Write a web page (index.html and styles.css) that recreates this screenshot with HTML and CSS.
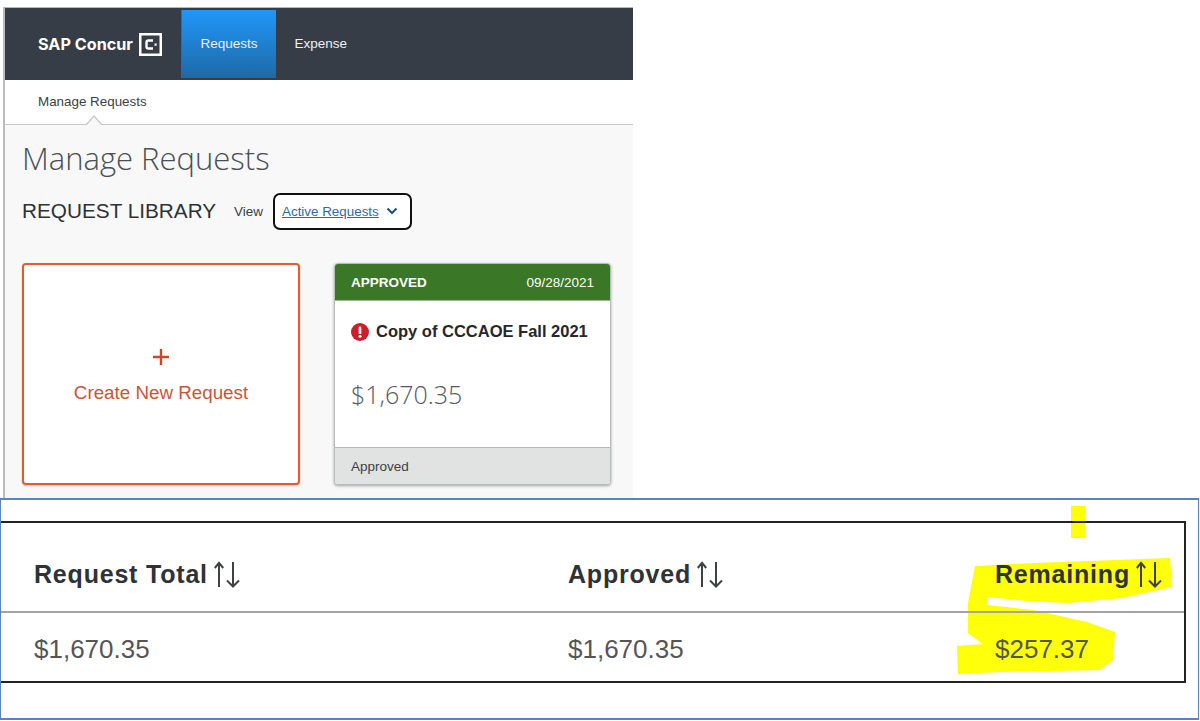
FILE: index.html
```html
<!DOCTYPE html>
<html lang="en">
<head>
<meta charset="utf-8">
<title>SAP Concur Manage Requests</title>
<link rel="stylesheet" href="styles.css">
</head>
<body>
<svg class="defs" width="0" height="0" aria-hidden="true">
  <symbol id="sort-arrows" viewBox="0 0 27 27">
    <path d="M5 26V2M.8 7 5 1.800 9.200 7M19 1v24M13 19.500l6 6 6-6" fill="none" stroke="#3f4245" stroke-width="2"/>
  </symbol>
</svg>
<section class="app">
  <header class="nav">
    <div class="brand">
      <span class="brand-name">SAP Concur</span>
      <svg class="brand-mark" width="23" height="23" viewBox="0 0 23 23" aria-hidden="true">
        <rect x="1.250" y="1.250" width="20.500" height="20.500" fill="none" stroke="#fff" stroke-width="2.500"/>
        <path d="M14 7.500H9.500a2 2 0 0 0-2 2v4a2 2 0 0 0 2 2H14" fill="none" stroke="#fff" stroke-width="2.400"/>
        <rect x="15.500" y="10.500" width="2.200" height="2.200" fill="#fff"/>
      </svg>
    </div>
    <a class="tab tab-active">Requests</a>
    <a class="tab">Expense</a>
  </header>
  <nav class="subnav"><span>Manage Requests</span><i class="caret"></i></nav>
  <main class="content">
    <h1 class="title">Manage Requests</h1>
    <div class="library">
      <h2 class="library-title">REQUEST LIBRARY</h2>
      <span class="view-label">View</span>
      <div class="view-select">
        <a class="view-link">Active Requests</a>
        <svg width="12" height="8" viewBox="0 0 12 8" aria-hidden="true"><path d="M1.500 1.500 6 6l4.500-4.500" fill="none" stroke="#1f4e79" stroke-width="2"/></svg>
      </div>
    </div>
    <div class="cards">
      <div class="create">
        <svg width="16" height="16" viewBox="0 0 16 16" aria-hidden="true"><path d="M8 0v16M0 8h16" stroke="#c8482c" stroke-width="2.400"/></svg>
        <span>Create New Request</span>
      </div>
      <article class="card">
        <div class="card-head"><strong>APPROVED</strong><span>09/28/2021</span></div>
        <div class="card-body">
          <div class="card-name">
            <svg width="18" height="18" viewBox="0 0 18 18" aria-hidden="true"><circle cx="9" cy="9" r="9" fill="#c9202c"/><rect x="7.700" y="3.500" width="2.600" height="7.500" rx="1" fill="#fff"/><circle cx="9" cy="13.300" r="1.500" fill="#fff"/></svg>
            <span>Copy of CCCAOE Fall 2021</span>
          </div>
          <div class="card-amount">$1,670.35</div>
        </div>
        <div class="card-foot">Approved</div>
      </article>
    </div>
  </main>
</section>
<section class="panel">
  <svg class="highlight" width="1200" height="223" viewBox="0 498 1200 223" aria-hidden="true">
    <path fill="#ffff0a" d="M1071 506h14l1 32h-15zM975 566l60-3 135-5 2 29-50 11-55 5-40-2-39-4-1 8 46 5 54 12 28 10-2 28-13 10-100 2-42 2-1-28 26-2-15-11v-30z"/>
  </svg>
  <div class="table">
    <div class="row row-head">
      <div class="cell cell-a">Request Total <svg class="sort" width="27" height="27"><use href="#sort-arrows"/></svg></div>
      <div class="cell cell-b">Approved <svg class="sort" width="27" height="27"><use href="#sort-arrows"/></svg></div>
      <div class="cell cell-c">Remaining <svg class="sort" width="27" height="27"><use href="#sort-arrows"/></svg></div>
    </div>
    <div class="row row-data">
      <div class="cell cell-a">$1,670.35</div>
      <div class="cell cell-b">$1,670.35</div>
      <div class="cell cell-c">$257.37</div>
    </div>
  </div>
</section>
</body>
</html>
```

FILE: styles.css
```css
* { box-sizing: border-box; }
html, body { margin: 0; padding: 0; }
body {
  width: 1200px;
  height: 721px;
  overflow: hidden;
  background: #fff;
  font-family: "Liberation Sans", Arial, sans-serif;
  padding-top: 7px;
}
.defs { display: block; height: 0; }
.app {
  width: 630px;
  height: 491px;
  margin-left: 3px;
  border-left: 2px solid #b9bbbd;
  border-top: 1px solid #b4b6b8;
  background: #f8f8f8;
}
.nav {
  height: 72px;
  display: flex;
  align-items: center;
  background: #373d46;
  color: #fff;
}
.brand {
  display: flex;
  align-items: center;
  gap: 6px;
  width: 177px;
  padding-left: 33px;
}
.brand-name {
  font-family: Inter, "Liberation Sans", sans-serif;
  font-size: 16.200px;
  font-weight: 700;
  white-space: nowrap;
}
.brand-mark { flex: none; }
.tab {
  font-size: 13.500px;
  line-height: 68px;
  padding: 0 18.500px;
  color: #eef0f2;
}
.tab-active {
  width: 94px;
  height: 68px;
  background: linear-gradient(#2197f8, #1e69a7);
  box-shadow: -1px 0 0 #54606c;
}
.subnav {
  position: relative;
  height: 45px;
  padding: 14px 0 0 33px;
  background: #fff;
  border-bottom: 1px solid #c9c9c9;
  font-size: 13.400px;
  color: #3b3f44;
}
.caret {
  position: absolute;
  left: 80px;
  bottom: -1px;
  width: 0;
  height: 0;
  border-left: 9px solid transparent;
  border-right: 9px solid transparent;
  border-bottom: 10px solid #c9c9c9;
}
.caret::after {
  content: "";
  position: absolute;
  left: -8px;
  top: 1.500px;
  border-left: 8px solid transparent;
  border-right: 8px solid transparent;
  border-bottom: 9px solid #f8f8f8;
}
.content { padding: 0 0 0 17px; }
.title {
  margin: 13px 0 0;
  font-family: "Open Sans", sans-serif;
  font-size: 31px;
  line-height: 40px;
  font-weight: 300;
  color: #4a4f55;
}
.library {
  display: flex;
  align-items: center;
  margin-top: 15px;
  height: 36px;
}
.library-title {
  margin: 0;
  width: 212px;
  font-size: 20.750px;
  font-weight: 400;
  color: #2e3236;
  white-space: nowrap;
}
.view-label {
  width: 39px;
  font-size: 13.500px;
  color: #3b3f44;
}
.view-select {
  display: flex;
  align-items: center;
  gap: 7px;
  width: 139px;
  height: 37px;
  padding-left: 7px;
  border: 2px solid #111;
  border-radius: 7px;
  background: #fff;
}
.view-link {
  font-size: 13.400px;
  color: #2f6aa3;
  text-decoration: underline;
  white-space: nowrap;
}
.cards {
  display: flex;
  gap: 34px;
  margin-top: 34px;
}
.create {
  width: 278px;
  height: 222px;
  display: flex;
  flex-direction: column;
  align-items: center;
  padding-top: 84px;
  gap: 17px;
  background: #fff;
  border: 2px solid #e9592f;
  border-radius: 4px;
  box-shadow: 0 1px 2px rgba(0, 0, 0, .2);
  color: #c8553b;
  font-size: 18.800px;
}
.card {
  width: 277px;
  height: 222px;
  display: flex;
  flex-direction: column;
  background: #fff;
  border: 1px solid #b9bcbc;
  border-radius: 4px;
  box-shadow: 0 1px 3px rgba(0, 0, 0, .35);
  overflow: hidden;
}
.card-head {
  height: 37px;
  flex: none;
  display: flex;
  align-items: center;
  justify-content: space-between;
  padding: 0 16px;
  background: #3a7726;
  border-bottom: 1px solid #9fb0a0;
  color: #fff;
  font-size: 13.500px;
}
.card-body { flex: 1; padding: 21px 16px 0; }
.card-name {
  display: flex;
  align-items: center;
  gap: 7px;
  font-size: 16.500px;
  font-weight: 700;
  color: #24272b;
  white-space: nowrap;
}
.card-name svg { flex: none; }
.card-amount {
  margin-top: 37px;
  font-family: "Open Sans", sans-serif;
  font-weight: 300;
  font-size: 25px;
  line-height: 32px;
  color: #555a60;
}
.card-foot {
  flex: none;
  height: 37px;
  padding: 0 16px;
  display: flex;
  align-items: center;
  background: #e1e3e2;
  border-top: 1px solid #b4b7b7;
  font-size: 13.500px;
  color: #3b3f44;
}
.panel {
  position: relative;
  width: 1199px;
  height: 222px;
  padding-top: 21px;
  background: #fff;
  border: 2px solid #5b83bd;
  border-left-width: 1px;
  border-right-width: 1px;
}
.highlight {
  position: absolute;
  left: -1px;
  top: -2px;
}
.table {
  position: relative;
  width: 1185px;
  height: 162px;
  border: 2px solid #222;
  border-left: 0;
}
.row { display: flex; }
.row-head {
  height: 90px;
  padding-top: 36px;
  border-bottom: 2px solid #a3a3a3;
  font-size: 25px;
  font-weight: 700;
  color: #2f3236;
  letter-spacing: .8px;
}
.row-data {
  height: 68px;
  padding-top: 21px;
  font-size: 26px;
  color: #555;
}
.cell { white-space: nowrap; line-height: 30px; }
.cell-a { width: 567px; padding-left: 33px; }
.cell-b { width: 427px; }
.cell-c { flex: 1; }
.sort { vertical-align: -5px; margin-left: -2px; }
```
